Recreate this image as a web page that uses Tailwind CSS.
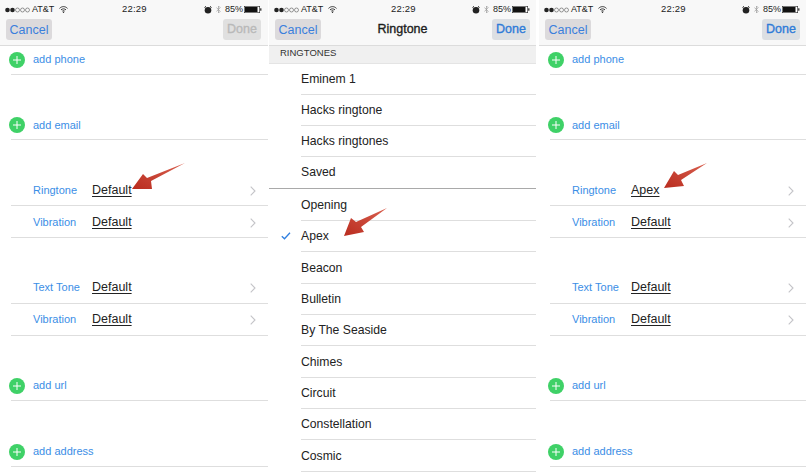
<!DOCTYPE html>
<html lang="en">
<head>
    <meta charset="UTF-8">
    <title>Ringtone settings</title>
    <script src="https://cdn.jsdelivr.net/npm/@tailwindcss/browser@4"></script>
</head>
<body class="bg-white w-[806px] h-[475px] overflow-hidden relative font-['Liberation_Sans',Arial,sans-serif]">
    <div class="flex w-[806px] h-[475px]">

        <!-- left: edit contact -->
        <div class="w-[268px] shrink-0 h-full">
            <div class="h-[46px] bg-[#f8f8f8] border-b border-[#dcdcdc]">
                <div class="h-[19px] flex items-center relative pl-[5px] pr-[6px] text-[9px] text-[#222]">
                    <svg width="26" height="6" viewBox="0 0 26 6"><circle cx="2.5" cy="3" r="2.3" fill="#222"/><circle cx="7.5" cy="3" r="2.3" fill="#222"/><circle cx="12.5" cy="3" r="2" fill="none" stroke="#555" stroke-width=".6"/><circle cx="17.5" cy="3" r="2" fill="none" stroke="#555" stroke-width=".6"/><circle cx="22.5" cy="3" r="2" fill="none" stroke="#555" stroke-width=".6"/></svg>
                    <span class="ml-[1px]">AT&amp;T</span>
                    <svg class="ml-[5px]" width="9" height="7" viewBox="0 0 9 7"><path d="M0.5 2.4C3 0 6 0 8.500 2.4M2 3.900C3.500 2.500 5.500 2.500 7 3.900M3.300 5.200C4 4.500 5 4.500 5.700 5.200" fill="none" stroke="#222" stroke-width=".9"/><circle cx="4.500" cy="6.200" r=".7" fill="#222"/></svg>
                    <span class="absolute left-[122px] w-[24px] text-center text-[9.500px] tracking-[.2px]">22:29</span>
                    <div class="ml-auto flex items-center">
                        <svg width="8" height="8" viewBox="0 0 8 8"><circle cx="4" cy="4.300" r="3.300" fill="#222"/><path d="M.5 1.500L2 .4M7.500 1.500L6 .4" stroke="#222"/></svg>
                        <svg class="ml-[4px]" width="5" height="9" viewBox="0 0 5 9"><path d="M.4 2.500L4.200 6.300L2.500 8V1L4.200 2.700L.4 6.500" fill="none" stroke="#999" stroke-width=".7"/></svg>
                        <span class="ml-[4px] text-[9px]">85%</span>
                        <svg class="ml-[1px]" width="18" height="7" viewBox="0 0 18 7"><rect x=".3" y=".3" width="15.400" height="6.400" fill="#fff" stroke="#222" stroke-width=".6"/><rect x="1" y="1" width="12.500" height="5" fill="#111"/><rect x="16.200" y="2.300" width="1.200" height="2.400" fill="#222"/></svg>
                    </div>
                </div>
                <div class="flex justify-between pl-[6px] pr-[7px]">
                    <div class="h-[21px] w-[46px] pt-[2px] rounded-[3px] bg-[#dcdadc] flex items-center justify-center text-[12.500px] text-[#3a7fdc]">Cancel</div>
                    <div class="h-[21px] w-[38px] rounded-[3px] bg-[#e0e0e0] flex items-center justify-center text-[12.500px] [-webkit-text-stroke:0.35px] text-[#b9b9b9]">Done</div>
                </div>
            </div>
            <div class="pl-[11px]">
                <div class="h-[29px] pb-px border-b border-[#dedede] flex items-center text-[11px] text-[#3b8ee6]">
                    <span class="w-[16px] h-[16px] rounded-full bg-[#3fd167] flex items-center justify-center -ml-[2px]"><svg width="8" height="8" viewBox="0 0 8 8"><path d="M4 0V8M0 4H8" stroke="#fff" stroke-width="1"/></svg></span>
                    <span class="ml-[8px]">add phone</span>
                </div>
                <div class="mt-[34px] h-[31px] pt-[2px] border-b border-[#dedede] flex items-center text-[11px] text-[#3b8ee6]">
                    <span class="w-[16px] h-[16px] rounded-full bg-[#3fd167] flex items-center justify-center -ml-[2px]"><svg width="8" height="8" viewBox="0 0 8 8"><path d="M4 0V8M0 4H8" stroke="#fff" stroke-width="1"/></svg></span>
                    <span class="ml-[8px]">add email</span>
                </div>
                <div class="mt-[34px] h-[32px] pt-[2px] border-b border-[#dedede] flex items-center">
                    <span class="ml-[22px] w-[59px] text-[11px] text-[#3b8ee6]">Ringtone</span>
                    <span class="text-[12.500px] text-[#222] underline underline-offset-2">Default</span>
                    <svg class="ml-auto mr-[12px]" width="6" height="10" viewBox="0 0 6 10"><path d="M.7 .7L5 5L.7 9.300" fill="none" stroke="#c4c4c8" stroke-width="1.100"/></svg>
                </div>
                <div class="h-[32px] pt-[2px] border-b border-[#dedede] flex items-center">
                    <span class="ml-[22px] w-[59px] text-[11px] text-[#3b8ee6]">Vibration</span>
                    <span class="text-[12.500px] text-[#222] underline underline-offset-2">Default</span>
                    <svg class="ml-auto mr-[12px]" width="6" height="10" viewBox="0 0 6 10"><path d="M.7 .7L5 5L.7 9.300" fill="none" stroke="#c4c4c8" stroke-width="1.100"/></svg>
                </div>
                <div class="mt-[34px] h-[32px] border-b border-[#dedede] flex items-center">
                    <span class="ml-[22px] w-[59px] text-[11px] text-[#3b8ee6]">Text Tone</span>
                    <span class="text-[12.500px] text-[#222] underline underline-offset-2">Default</span>
                    <svg class="ml-auto mr-[12px]" width="6" height="10" viewBox="0 0 6 10"><path d="M.7 .7L5 5L.7 9.300" fill="none" stroke="#c4c4c8" stroke-width="1.100"/></svg>
                </div>
                <div class="h-[32px] border-b border-[#dedede] flex items-center">
                    <span class="ml-[22px] w-[59px] text-[11px] text-[#3b8ee6]">Vibration</span>
                    <span class="text-[12.500px] text-[#222] underline underline-offset-2">Default</span>
                    <svg class="ml-auto mr-[12px]" width="6" height="10" viewBox="0 0 6 10"><path d="M.7 .7L5 5L.7 9.300" fill="none" stroke="#c4c4c8" stroke-width="1.100"/></svg>
                </div>
                <div class="mt-[33px] h-[32px] pt-[2px] border-b border-[#dedede] flex items-center text-[11px] text-[#3b8ee6]">
                    <span class="w-[16px] h-[16px] rounded-full bg-[#3fd167] flex items-center justify-center -ml-[2px]"><svg width="8" height="8" viewBox="0 0 8 8"><path d="M4 0V8M0 4H8" stroke="#fff" stroke-width="1"/></svg></span>
                    <span class="ml-[8px]">add url</span>
                </div>
                <div class="mt-[34px] h-[32px] pt-[2px] border-b border-[#dedede] flex items-center text-[11px] text-[#3b8ee6]">
                    <span class="w-[16px] h-[16px] rounded-full bg-[#3fd167] flex items-center justify-center -ml-[2px]"><svg width="8" height="8" viewBox="0 0 8 8"><path d="M4 0V8M0 4H8" stroke="#fff" stroke-width="1"/></svg></span>
                    <span class="ml-[8px]">add address</span>
                </div>
            </div>
        </div>

        <!-- middle: ringtone picker -->
        <div class="ml-px w-[267px] shrink-0 h-full">
            <div class="h-[46px] bg-[#f8f8f8] border-b border-[#dcdcdc]">
                <div class="h-[19px] flex items-center relative pl-[5px] pr-[6px] text-[9px] text-[#222]">
                    <svg width="26" height="6" viewBox="0 0 26 6"><circle cx="2.5" cy="3" r="2.3" fill="#222"/><circle cx="7.5" cy="3" r="2.3" fill="#222"/><circle cx="12.5" cy="3" r="2" fill="none" stroke="#555" stroke-width=".6"/><circle cx="17.5" cy="3" r="2" fill="none" stroke="#555" stroke-width=".6"/><circle cx="22.5" cy="3" r="2" fill="none" stroke="#555" stroke-width=".6"/></svg>
                    <span class="ml-[1px]">AT&amp;T</span>
                    <svg class="ml-[5px]" width="9" height="7" viewBox="0 0 9 7"><path d="M0.5 2.4C3 0 6 0 8.500 2.4M2 3.900C3.500 2.500 5.500 2.500 7 3.900M3.300 5.200C4 4.500 5 4.500 5.700 5.200" fill="none" stroke="#222" stroke-width=".9"/><circle cx="4.500" cy="6.200" r=".7" fill="#222"/></svg>
                    <span class="absolute left-[122px] w-[24px] text-center text-[9.500px] tracking-[.2px]">22:29</span>
                    <div class="ml-auto flex items-center">
                        <svg width="8" height="8" viewBox="0 0 8 8"><circle cx="4" cy="4.300" r="3.300" fill="#222"/><path d="M.5 1.500L2 .4M7.500 1.500L6 .4" stroke="#222"/></svg>
                        <svg class="ml-[4px]" width="5" height="9" viewBox="0 0 5 9"><path d="M.4 2.500L4.200 6.300L2.500 8V1L4.200 2.700L.4 6.500" fill="none" stroke="#999" stroke-width=".7"/></svg>
                        <span class="ml-[4px] text-[9px]">85%</span>
                        <svg class="ml-[1px]" width="18" height="7" viewBox="0 0 18 7"><rect x=".3" y=".3" width="15.400" height="6.400" fill="#fff" stroke="#222" stroke-width=".6"/><rect x="1" y="1" width="12.500" height="5" fill="#111"/><rect x="16.200" y="2.300" width="1.200" height="2.400" fill="#222"/></svg>
                    </div>
                </div>
                <div class="flex justify-between items-center pl-[6px] pr-[6px]">
                    <div class="h-[21px] w-[46px] pt-[2px] rounded-[3px] bg-[#dcdadc] flex items-center justify-center text-[12.500px] text-[#3a7fdc]">Cancel</div>
                    <div class="text-[12.500px] [-webkit-text-stroke:0.35px] text-[#1c1c1c] -ml-[8px]">Ringtone</div>
                    <div class="h-[21px] w-[38px] rounded-[3px] bg-[#dcdfe3] flex items-center justify-center text-[12.500px] [-webkit-text-stroke:0.35px] text-[#2f7bd8]">Done</div>
                </div>
            </div>
            <div class="h-[18px] pb-[2px] bg-[#f0f0f0] border-b border-[#e4e4e4] pl-[11px] flex items-center text-[9.500px] text-[#333]">RINGTONES</div>
            <div class="pl-[32px] text-[12.200px] text-[#222]">
                <div class="h-[31px] border-b border-[#dedede] flex items-center">Eminem 1</div>
                <div class="h-[31px] border-b border-[#dedede] flex items-center">Hacks ringtone</div>
                <div class="h-[31px] border-b border-[#dedede] flex items-center">Hacks ringtones</div>
                <div class="h-[31px] flex items-center">Saved</div>
            </div>
            <div class="h-px bg-[#a9a9a9]"></div>
            <div class="pl-[32px] text-[12.200px] text-[#222]">
                <div class="h-[32px] pt-[2px] border-b border-[#dedede] flex items-center">Opening</div>
                <div class="h-[31px] border-b border-[#dedede] flex items-center relative">
                    <svg class="absolute -left-[20px] top-[11px]" width="10" height="8" viewBox="0 0 10 8"><path d="M.8 4.200L3.500 6.800L9 .8" fill="none" stroke="#2f7fe0" stroke-width="1.300"/></svg>
                    Apex
                </div>
                <div class="h-[32px] pt-[2px] border-b border-[#dedede] flex items-center">Beacon</div>
                <div class="h-[31px] border-b border-[#dedede] flex items-center">Bulletin</div>
                <div class="h-[31px] border-b border-[#dedede] flex items-center">By The Seaside</div>
                <div class="h-[32px] pt-[2px] border-b border-[#dedede] flex items-center">Chimes</div>
                <div class="h-[31px] border-b border-[#dedede] flex items-center">Circuit</div>
                <div class="h-[31px] border-b border-[#dedede] flex items-center">Constellation</div>
                <div class="h-[32px] pt-[2px] border-b border-[#dedede] flex items-center">Cosmic</div>
            </div>
        </div>

        <!-- right: edit contact, ringtone set -->
        <div class="ml-[3px] w-[267px] shrink-0 h-full">
            <div class="h-[46px] bg-[#f8f8f8] border-b border-[#dcdcdc]">
                <div class="h-[19px] flex items-center relative pl-[5px] pr-[6px] text-[9px] text-[#222]">
                    <svg width="26" height="6" viewBox="0 0 26 6"><circle cx="2.5" cy="3" r="2.3" fill="#222"/><circle cx="7.5" cy="3" r="2.3" fill="#222"/><circle cx="12.5" cy="3" r="2" fill="none" stroke="#555" stroke-width=".6"/><circle cx="17.5" cy="3" r="2" fill="none" stroke="#555" stroke-width=".6"/><circle cx="22.5" cy="3" r="2" fill="none" stroke="#555" stroke-width=".6"/></svg>
                    <span class="ml-[1px]">AT&amp;T</span>
                    <svg class="ml-[5px]" width="9" height="7" viewBox="0 0 9 7"><path d="M0.5 2.4C3 0 6 0 8.500 2.4M2 3.900C3.500 2.500 5.500 2.500 7 3.900M3.300 5.200C4 4.500 5 4.500 5.700 5.200" fill="none" stroke="#222" stroke-width=".9"/><circle cx="4.500" cy="6.200" r=".7" fill="#222"/></svg>
                    <span class="absolute left-[122px] w-[24px] text-center text-[9.500px] tracking-[.2px]">22:29</span>
                    <div class="ml-auto flex items-center">
                        <svg width="8" height="8" viewBox="0 0 8 8"><circle cx="4" cy="4.300" r="3.300" fill="#222"/><path d="M.5 1.500L2 .4M7.500 1.500L6 .4" stroke="#222"/></svg>
                        <svg class="ml-[4px]" width="5" height="9" viewBox="0 0 5 9"><path d="M.4 2.500L4.200 6.300L2.500 8V1L4.200 2.700L.4 6.500" fill="none" stroke="#999" stroke-width=".7"/></svg>
                        <span class="ml-[4px] text-[9px]">85%</span>
                        <svg class="ml-[1px]" width="18" height="7" viewBox="0 0 18 7"><rect x=".3" y=".3" width="15.400" height="6.400" fill="#fff" stroke="#222" stroke-width=".6"/><rect x="1" y="1" width="12.500" height="5" fill="#111"/><rect x="16.200" y="2.300" width="1.200" height="2.400" fill="#222"/></svg>
                    </div>
                </div>
                <div class="flex justify-between pl-[6px] pr-[6px]">
                    <div class="h-[21px] w-[46px] pt-[2px] rounded-[3px] bg-[#dcdadc] flex items-center justify-center text-[12.500px] text-[#3a7fdc]">Cancel</div>
                    <div class="h-[21px] w-[38px] rounded-[3px] bg-[#dcdfe3] flex items-center justify-center text-[12.500px] [-webkit-text-stroke:0.35px] text-[#2f7bd8]">Done</div>
                </div>
            </div>
            <div class="pl-[11px]">
                <div class="h-[29px] pb-px border-b border-[#dedede] flex items-center text-[11px] text-[#3b8ee6]">
                    <span class="w-[16px] h-[16px] rounded-full bg-[#3fd167] flex items-center justify-center -ml-[2px]"><svg width="8" height="8" viewBox="0 0 8 8"><path d="M4 0V8M0 4H8" stroke="#fff" stroke-width="1"/></svg></span>
                    <span class="ml-[8px]">add phone</span>
                </div>
                <div class="mt-[34px] h-[31px] pt-[2px] border-b border-[#dedede] flex items-center text-[11px] text-[#3b8ee6]">
                    <span class="w-[16px] h-[16px] rounded-full bg-[#3fd167] flex items-center justify-center -ml-[2px]"><svg width="8" height="8" viewBox="0 0 8 8"><path d="M4 0V8M0 4H8" stroke="#fff" stroke-width="1"/></svg></span>
                    <span class="ml-[8px]">add email</span>
                </div>
                <div class="mt-[34px] h-[32px] pt-[2px] border-b border-[#dedede] flex items-center">
                    <span class="ml-[22px] w-[59px] text-[11px] text-[#3b8ee6]">Ringtone</span>
                    <span class="text-[12.500px] text-[#222] underline underline-offset-2">Apex</span>
                    <svg class="ml-auto mr-[12px]" width="6" height="10" viewBox="0 0 6 10"><path d="M.7 .7L5 5L.7 9.300" fill="none" stroke="#c4c4c8" stroke-width="1.100"/></svg>
                </div>
                <div class="h-[32px] pt-[2px] border-b border-[#dedede] flex items-center">
                    <span class="ml-[22px] w-[59px] text-[11px] text-[#3b8ee6]">Vibration</span>
                    <span class="text-[12.500px] text-[#222] underline underline-offset-2">Default</span>
                    <svg class="ml-auto mr-[12px]" width="6" height="10" viewBox="0 0 6 10"><path d="M.7 .7L5 5L.7 9.300" fill="none" stroke="#c4c4c8" stroke-width="1.100"/></svg>
                </div>
                <div class="mt-[34px] h-[32px] border-b border-[#dedede] flex items-center">
                    <span class="ml-[22px] w-[59px] text-[11px] text-[#3b8ee6]">Text Tone</span>
                    <span class="text-[12.500px] text-[#222] underline underline-offset-2">Default</span>
                    <svg class="ml-auto mr-[12px]" width="6" height="10" viewBox="0 0 6 10"><path d="M.7 .7L5 5L.7 9.300" fill="none" stroke="#c4c4c8" stroke-width="1.100"/></svg>
                </div>
                <div class="h-[32px] border-b border-[#dedede] flex items-center">
                    <span class="ml-[22px] w-[59px] text-[11px] text-[#3b8ee6]">Vibration</span>
                    <span class="text-[12.500px] text-[#222] underline underline-offset-2">Default</span>
                    <svg class="ml-auto mr-[12px]" width="6" height="10" viewBox="0 0 6 10"><path d="M.7 .7L5 5L.7 9.300" fill="none" stroke="#c4c4c8" stroke-width="1.100"/></svg>
                </div>
                <div class="mt-[33px] h-[32px] pt-[2px] border-b border-[#dedede] flex items-center text-[11px] text-[#3b8ee6]">
                    <span class="w-[16px] h-[16px] rounded-full bg-[#3fd167] flex items-center justify-center -ml-[2px]"><svg width="8" height="8" viewBox="0 0 8 8"><path d="M4 0V8M0 4H8" stroke="#fff" stroke-width="1"/></svg></span>
                    <span class="ml-[8px]">add url</span>
                </div>
                <div class="mt-[34px] h-[32px] pt-[2px] border-b border-[#dedede] flex items-center text-[11px] text-[#3b8ee6]">
                    <span class="w-[16px] h-[16px] rounded-full bg-[#3fd167] flex items-center justify-center -ml-[2px]"><svg width="8" height="8" viewBox="0 0 8 8"><path d="M4 0V8M0 4H8" stroke="#fff" stroke-width="1"/></svg></span>
                    <span class="ml-[8px]">add address</span>
                </div>
            </div>
        </div>
    </div>

    <!-- red annotation arrows on top of the screenshots -->
    <svg class="absolute left-0 top-0 pointer-events-none" width="806" height="475" viewBox="0 0 806 475">
        <defs>
            <linearGradient id="arrowRed" x1="1" y1="0" x2="0" y2="1">
                <stop offset="0" stop-color="#d9604f"/>
                <stop offset="1" stop-color="#b92c1f"/>
            </linearGradient>
        </defs>
        <polygon points="185,163 151,181 152,189 132,189 143,174 147,178" fill="url(#arrowRed)"/>
        <polygon points="387,208 361,227 364,232 344,236 351,218 356,222" fill="url(#arrowRed)"/>
        <polygon points="707,163 681,180 684,186 664,188 674,171 678,175" fill="url(#arrowRed)"/>
    </svg>
</body>
</html>
